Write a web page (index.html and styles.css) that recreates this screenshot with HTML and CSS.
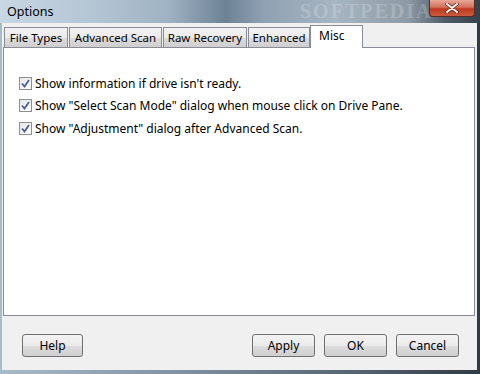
FILE: index.html
```html
<!DOCTYPE html>
<html lang="en">
<head>
  <title>Options</title>
  <link rel="stylesheet" href="styles.css">
</head>
<body>
  <div class="window">
    <!-- title bar -->
    <div class="titlebar">
      <span class="title">Options</span>
      <span class="watermark">SOFTPEDIA</span>
      <div class="close">
        <svg width="16" height="10" viewBox="0 0 16 10">
          <path d="M3 1 L13 9 M13 1 L3 9" stroke="#5a1a10" stroke-width="3.4" stroke-linecap="round"/>
          <path d="M3 1 L13 9 M13 1 L3 9" stroke="#ffffff" stroke-width="2" stroke-linecap="round"/>
        </svg>
      </div>
    </div>

    <div class="client">
      <div class="tabs">
        <div class="tab w-types">File Types</div>
        <div class="tab w-adv">Advanced Scan</div>
        <div class="tab w-raw">Raw Recovery</div>
        <div class="tab w-enh">Enhanced</div>
        <div class="tab active">Misc</div>
      </div>

      <div class="panel">
        <label class="check">
          <span class="box">
            <svg width="13" height="13" viewBox="0 0 13 13">
              <path d="M3 6.5 L5.5 9.5 L10 3" fill="none" stroke="#4a5e96" stroke-width="1.8"/>
            </svg>
          </span>
          Show information if drive isn't ready.
        </label>
        <label class="check">
          <span class="box">
            <svg width="13" height="13" viewBox="0 0 13 13">
              <path d="M3 6.5 L5.5 9.5 L10 3" fill="none" stroke="#4a5e96" stroke-width="1.8"/>
            </svg>
          </span>
          Show "Select Scan Mode" dialog when mouse click on Drive Pane.
        </label>
        <label class="check">
          <span class="box">
            <svg width="13" height="13" viewBox="0 0 13 13">
              <path d="M3 6.5 L5.5 9.5 L10 3" fill="none" stroke="#4a5e96" stroke-width="1.8"/>
            </svg>
          </span>
          Show "Adjustment" dialog after Advanced Scan.
        </label>
      </div>

      <div class="buttons">
        <button type="button" class="btn help">Help</button>
        <div class="spacer"></div>
        <button type="button" class="btn">Apply</button>
        <button type="button" class="btn">OK</button>
        <button type="button" class="btn">Cancel</button>
      </div>
    </div>
    <div class="footer"></div>
  </div>
</body>
</html>
```

FILE: styles.css
```css
body {
  margin: 0;
  font-family: "Noto Sans", "Open Sans", sans-serif;
  font-size: 12px;
  color: #000;
}

.window {
  width: 480px;
  height: 374px;
  display: flex;
  flex-direction: column;
  background: linear-gradient(90deg, #a9bac9 0%, #7d8e9e 40%, #55636f 75%, #2f3a44 100%);
  overflow: hidden;
}

.titlebar {
  height: 23px;
  display: flex;
  align-items: flex-start;
  position: relative;
  background: linear-gradient(90deg, #c9d7e4 0%, #b3c4d3 20%, #9fb2c3 35%, #6e8296 47%, #8fa1b2 55%, #a7b5c2 70%, #8e9ba6 85%, #4d5a66 93%, #36414a 100%);
}

.title {
  padding: 3px 0 0 7px;
  font-size: 12.5px;
  flex: 1;
}

.watermark {
  position: absolute;
  left: 300px;
  top: 0;
  font-family: "Liberation Serif", serif;
  font-weight: bold;
  font-size: 20px;
  line-height: 22px;
  letter-spacing: 2px;
  color: rgba(255, 255, 255, 0.2);
}

.close {
  width: 44px;
  height: 16px;
  margin-right: 5px;
  border: 1px solid #5b2a22;
  border-top: none;
  border-radius: 0 0 4px 4px;
  background: linear-gradient(180deg, #e9a99a 0%, #d4705a 45%, #c0391f 55%, #c95a3c 100%);
  display: flex;
  align-items: center;
  justify-content: center;
  position: relative;
  z-index: 1;
}

.client {
  flex: 1;
  margin: 0 3px 0 2px;
  background: #f0f0f0;
  display: flex;
  flex-direction: column;
  padding: 2px 1px 0 1px;
}

.tabs {
  display: flex;
  padding-left: 1px;
  height: 22px;
  align-items: flex-end;
  position: relative;
  z-index: 1;
}

.tab {
  height: 19px;
  margin-right: 1px;
  line-height: 19px;
  font-size: 11.5px;
  text-align: center;
  border: 1px solid #898c95;
  border-bottom: none;
  background: linear-gradient(180deg, #f2f2f2 0%, #ebebeb 50%, #dddddd 51%, #cfcfcf 100%);
}

.w-types { width: 62px; }
.w-adv { width: 91px; }
.w-raw { width: 82px; }
.w-enh { width: 60px; margin-right: 0; }

.tab.active {
  height: 23px;
  line-height: 19px;
  margin-bottom: -1px;
  margin-right: 0;
  font-size: 12px;
  text-align: left;
  padding-left: 8px;
  box-sizing: border-box;
  width: 53px;
  background: #fff;
}

.panel {
  height: 243px;
  border: 1px solid #898c95;
  background: #fff;
  margin-right: 1px;
  padding: 24px 0 0 15px;
  display: flex;
  flex-direction: column;
}

.check {
  height: 22.5px;
  display: flex;
  align-items: center;
  gap: 3px;
}

.box {
  width: 11px;
  height: 11px;
  border: 1px solid #8e8f8f;
  background: linear-gradient(135deg, #e6e6e6 0%, #ffffff 100%);
  display: flex;
  align-items: center;
  justify-content: center;
}

.box svg {
  flex: none;
}

.buttons {
  display: flex;
  gap: 9px;
  padding: 18px 17px 0 19px;
}

.spacer {
  flex: 1;
}

.btn {
  width: 63px;
  height: 23px;
  font-family: "Noto Sans", "Open Sans", sans-serif;
  font-size: 12px;
  color: #000;
  border: 1px solid #707070;
  border-radius: 3px;
  background: linear-gradient(180deg, #f2f2f2 0%, #ebebeb 50%, #dddddd 51%, #cfcfcf 100%);
  padding: 0;
}

.btn.help {
  width: 61px;
}

.footer {
  height: 4px;
}
```
